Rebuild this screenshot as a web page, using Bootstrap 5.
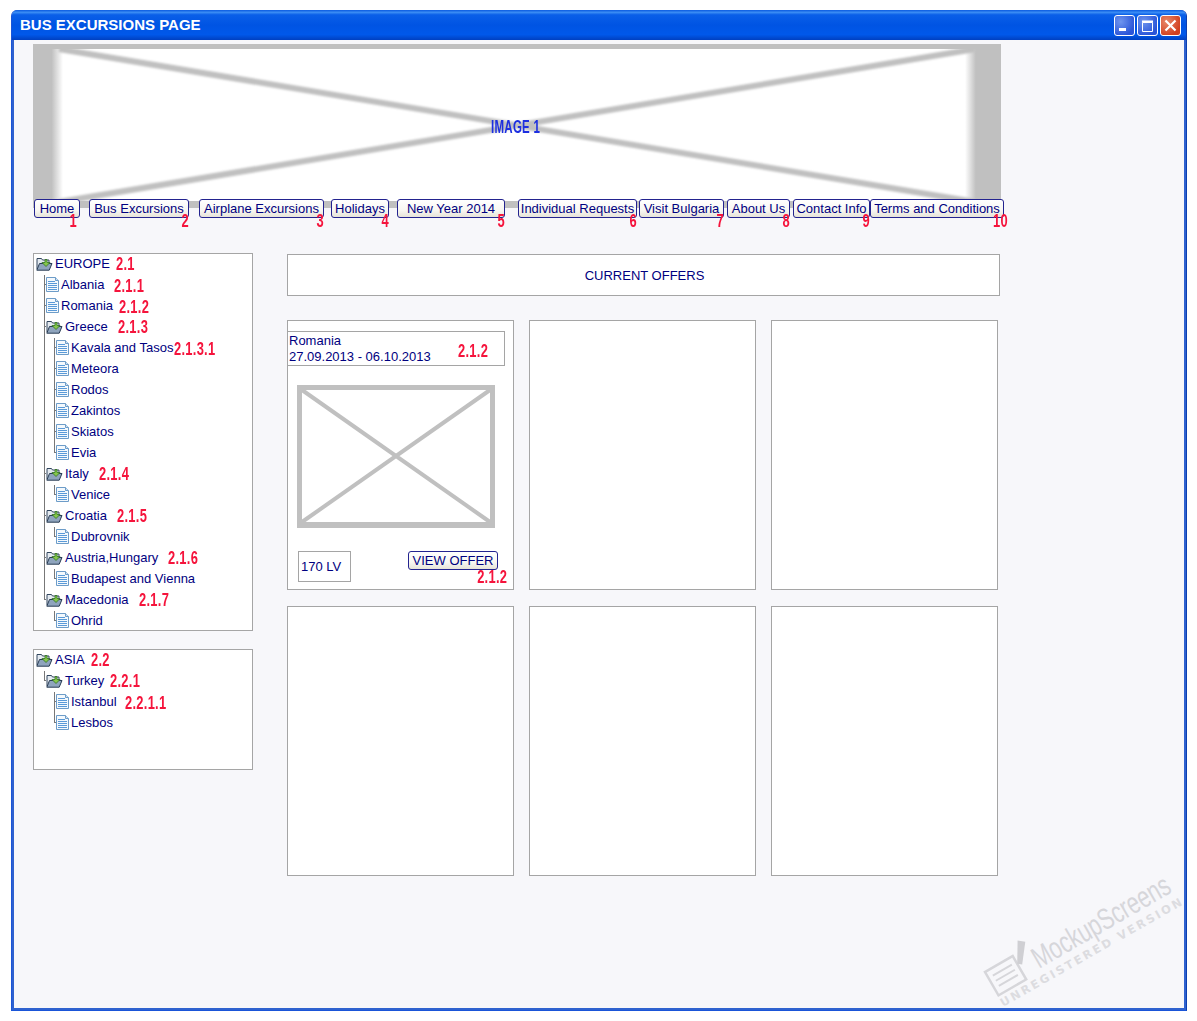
<!DOCTYPE html>
<html lang="en">
<head>
    <meta charset="UTF-8">
    <meta name="viewport" content="width=device-width, initial-scale=1.0">
    <title>Bus Excursions Page</title>
    <link href="https://cdn.jsdelivr.net/npm/bootstrap@5.3.0/dist/css/bootstrap.min.css" rel="stylesheet">
    <style>
        body {
            background: #fff;
            font-family: "Liberation Sans", Arial, sans-serif;
            font-size: 13px;
            color: #000080;
        }
        .app-window {
            position: relative;
            width: 1176px;
            height: 1001px;
            margin: 10px 0 0 11px;
            overflow: hidden;
            border-radius: 6px 6px 0 0;
            background: #f7f7fa;
            box-shadow: inset 2px 0 0 #2f62cf, inset -2px 0 0 #2f62cf, inset 0 -2px 0 #2f62cf;
            border-right: 1px solid #0c3fb0;
            border-left: 1px solid #1a55d8;
            border-bottom: 1px solid #1a55d8;
        }
        .title-bar {
            height: 30px;
            padding: 0 5px 0 8px;
            background: linear-gradient(#0a5ae0 0, #3a8cf4 8%, #0a5fe8 16%, #0054e3 50%, #0058ea 82%, #0040c0 100%);
        }
        .title-text {
            color: #fff;
            font-size: 15px;
            font-weight: 700;
        }
        .win-btn {
            width: 21px;
            height: 21px;
            margin-left: 2px;
            border: 1px solid #fff;
            border-radius: 3px;
            background: radial-gradient(circle at 30% 30%, #6f95ee, #2a55d8 75%);
        }
        .win-btn.is-close {
            background: radial-gradient(circle at 30% 30%, #e8886a, #d2401f 75%);
        }
        .win-btn svg {
            display: block;
        }
        .page-body {
            padding: 4px 0 0 21px;
        }
        .hero-image {
            position: relative;
            width: 968px;
            height: 164px;
        }
        .hero-image svg {
            display: block;
        }
        .menu-bar {
            position: relative;
            margin-top: -9px;
            margin-left: 1px;
        }
        .menu-btn {
            position: relative;
            height: 19px;
            padding: 0;
            border: 1px solid #23238f;
            border-radius: 3px;
            background: linear-gradient(#fff 0, #f8f7f2 60%, #e6e3d8 100%);
            color: #000080;
            font-size: 13px;
            line-height: 16px;
            white-space: nowrap;
            flex: none;
        }
        .menu-btn:hover {
            color: #000080;
            background: #fff;
            border-color: #23238f;
        }
        /* the red hand-written numbers: no condensed font here, so squeeze the bold one */
        .note-num {
            display: inline-block;
            font-weight: 700;
            font-size: 19px;
            line-height: 16px;
            letter-spacing: .4px;
            color: #f5143c;
            white-space: nowrap;
            transform: scaleX(.68);
            transform-origin: left center;
        }
        .hero-label {
            position: absolute;
            left: 458px;
            top: 75px;
            color: #1d2fe0;
            font-size: 18px;
            transform: scaleX(.64);
        }
        .menu-btn .note-num {
            position: absolute;
            top: 13px;
            right: -1px;
            transform-origin: right center;
        }
        .m1 { width: 46px; }
        .m1 .note-num { right: 2px !important; }
        .m2 { width: 100px; margin-left: 9px; }
        .m3 { width: 125px; margin-left: 10px; }
        .m4 { width: 58px; margin-left: 7px; }
        .m5 { width: 108px; margin-left: 8px; }
        .m6 { width: 119px; margin-left: 13px; }
        .m7 { width: 85px; margin-left: 2px; }
        .m8 { width: 63px; margin-left: 3px; }
        .m9 { width: 77px; margin-left: 3px; }
        .m10 { width: 134px; }
        .m10 .note-num { right: -5px !important; }
        .page-cols {
            margin-top: 35px;
            gap: 34px;
        }
        .side-col {
            width: 220px;
            flex: none;
        }
        .tree-box {
            padding: 0 0 0 2px;
            background: #fff;
            border: 1px solid #a5a5a5;
        }
        .tree-box.is-europe { height: 378px; margin-bottom: 18px; }
        .tree-box.is-asia { height: 121px; }
        .tree-list, .tree-list ul {
            list-style: none;
            margin: 0;
            padding: 0;
        }
        .tree-list ul {
            margin-left: 8px;
        }
        .tree-list ul li {
            position: relative;
            padding-left: 2px;
        }
        .tree-list ul li::before {
            content: "";
            position: absolute;
            left: 0;
            top: 0;
            bottom: 0;
            border-left: 1px solid #777;
        }
        .tree-list ul li:last-child::before {
            bottom: auto;
            height: 10px;
        }
        .tree-list ul li::after {
            content: "";
            position: absolute;
            left: 0;
            top: 9px;
            width: 2px;
            border-top: 1px solid #777;
        }
        .tree-row {
            position: relative;
            display: flex;
            align-items: center;
            height: 21px;
            padding-bottom: 2px;
            white-space: nowrap;
        }
        .tree-row svg {
            flex: none;
            margin-right: 2px;
        }
        .tree-row .note-num {
            margin-left: 6px;
        }
        .tree-row .note-wide {
            margin-left: 10px;
        }
        .tree-row .note-tight {
            margin-left: 1px;
        }
        .tree-row .note-low {
            margin-top: 3px;
        }
        .main-col {
            width: 713px;
            flex: none;
            padding-top: 1px;
        }
        .offers-title {
            height: 42px;
            margin-bottom: 24px;
            padding: 1px 0 0 2px;
            background: #fff;
            border: 1px solid #a5a5a5;
        }
        .offers-grid {
            display: grid;
            grid-template-columns: repeat(3, 227px);
            grid-auto-rows: 270px;
            column-gap: 15px;
            row-gap: 16px;
        }
        .offer-box {
            position: relative;
            background: #fff;
            border: 1px solid #a5a5a5;
            padding-top: 10px;
        }
        .offer-head {
            position: relative;
            height: 35px;
            margin-right: 8px;
            padding: 1px 0 0 1px;
            border: 1px solid #a5a5a5;
            border-left: 0;
            line-height: 16px;
        }
        .offer-head .note-num {
            position: absolute;
            left: 170px;
            top: 11px;
        }
        .offer-image {
            display: block;
            margin: 19px 0 0 9px;
        }
        .offer-foot {
            margin: 23px 15px 0 10px;
        }
        .price-box {
            width: 53px;
            height: 31px;
            padding-left: 2px;
            border: 1px solid #a5a5a5;
        }
        .offer-foot .menu-btn {
            width: 90px;
        }
        .offer-foot .menu-btn .note-num {
            top: 17px;
            right: -10px;
        }
        .watermark {
            position: absolute;
            right: 0;
            bottom: 0;
            pointer-events: none;
        }
    </style>
</head>
<body>
    <svg width="0" height="0" class="position-absolute">
        <symbol id="ico-folder" viewBox="0 0 17 14">
            <path d="M1 12V1.500h4.500l1 1.500H13v3" fill="#e4eaf0" stroke="#33475f"/>
            <path d="M.8 13.200 3.500 6.500H16l-2.800 6.700z" fill="#8fa4bd" stroke="#2a3d55"/>
            <path d="M9 2.500h2v3h3l-4 4-4-4h3z" fill="#86c84a" stroke="#2f6f22" stroke-width=".8"/>
        </symbol>
        <symbol id="ico-doc" viewBox="0 0 13 15">
            <path d="M.5.500h9l3 3v11H.500z" fill="#f4f9fd" stroke="#6d9cc8"/>
            <path d="M9.500.500v3h3" fill="#cfe2f3" stroke="#6d9cc8"/>
            <path d="M2 4.500h7M2 6.500h9M2 8.500h9M2 10.500h9M2 12.500h9" stroke="#5a9ad8"/>
        </symbol>
    </svg>

    <div class="app-window">
        <div class="title-bar d-flex align-items-center justify-content-between">
            <span class="title-text">BUS EXCURSIONS PAGE</span>
            <div class="d-flex">
                <div class="win-btn">
                    <svg width="19" height="19"><rect x="4" y="12" width="7" height="3" fill="#fff"/></svg>
                </div>
                <div class="win-btn">
                    <svg width="19" height="19"><path d="M4.500 6.500h10v9h-10z" fill="none" stroke="#fff"/><path d="M4 4.500h11v2H4z" fill="#fff"/></svg>
                </div>
                <div class="win-btn is-close">
                    <svg width="19" height="19"><path d="M4.500 4.500l10 10M14.500 4.500l-10 10" stroke="#fff" stroke-width="2.200"/></svg>
                </div>
            </div>
        </div>

        <div class="page-body">
            <div class="hero-image">
                <svg width="968" height="164">
                    <defs>
                        <linearGradient id="fadeLeft" x1="0" x2="1" y1="0" y2="0">
                            <stop offset="0" stop-color="#c0c0c0"/>
                            <stop offset=".62" stop-color="#c0c0c0"/>
                            <stop offset="1" stop-color="#c0c0c0" stop-opacity="0"/>
                        </linearGradient>
                        <linearGradient id="fadeRight" x1="1" x2="0" y1="0" y2="0">
                            <stop offset="0" stop-color="#c0c0c0"/>
                            <stop offset=".7" stop-color="#c0c0c0"/>
                            <stop offset="1" stop-color="#c0c0c0" stop-opacity="0"/>
                        </linearGradient>
                        <filter id="softBlur"><feGaussianBlur stdDeviation=".9"/></filter>
                    </defs>
                    <rect width="968" height="164" fill="#fff"/>
                    <g filter="url(#softBlur)">
                        <path d="M26 5 942 158M26 158 942 5" stroke="#c0c0c0" stroke-width="6"/>
                    </g>
                    <rect width="968" height="5" fill="#c0c0c0"/>
                    <rect y="157" width="968" height="7" fill="#c0c0c0"/>
                    <rect width="30" height="164" fill="url(#fadeLeft)"/>
                    <rect x="932" width="36" height="164" fill="url(#fadeRight)"/>
                </svg>
                <span class="note-num hero-label">IMAGE 1</span>
            </div>

            <div class="menu-bar d-flex">
                <button type="button" class="btn menu-btn m1">Home<span class="note-num">1</span></button>
                <button type="button" class="btn menu-btn m2">Bus Excursions<span class="note-num">2</span></button>
                <button type="button" class="btn menu-btn m3">Airplane Excursions<span class="note-num">3</span></button>
                <button type="button" class="btn menu-btn m4">Holidays<span class="note-num">4</span></button>
                <button type="button" class="btn menu-btn m5">New Year 2014<span class="note-num">5</span></button>
                <button type="button" class="btn menu-btn m6">Individual Requests<span class="note-num">6</span></button>
                <button type="button" class="btn menu-btn m7">Visit Bulgaria<span class="note-num">7</span></button>
                <button type="button" class="btn menu-btn m8">About Us<span class="note-num">8</span></button>
                <button type="button" class="btn menu-btn m9">Contact Info<span class="note-num">9</span></button>
                <button type="button" class="btn menu-btn m10">Terms and Conditions<span class="note-num">10</span></button>
            </div>

            <div class="page-cols d-flex">
                <div class="side-col">
                    <div class="tree-box is-europe">
                        <ul class="tree-list">
                            <li>
                                <div class="tree-row"><svg width="17" height="14"><use href="#ico-folder"/></svg>EUROPE<span class="note-num">2.1</span></div>
                                <ul>
                                    <li><div class="tree-row"><svg width="13" height="15"><use href="#ico-doc"/></svg>Albania<span class="note-num note-low note-wide">2.1.1</span></div></li>
                                    <li><div class="tree-row"><svg width="13" height="15"><use href="#ico-doc"/></svg>Romania<span class="note-num note-low">2.1.2</span></div></li>
                                    <li>
                                        <div class="tree-row"><svg width="17" height="14"><use href="#ico-folder"/></svg>Greece<span class="note-num note-wide">2.1.3</span></div>
                                        <ul>
                                            <li><div class="tree-row"><svg width="13" height="15"><use href="#ico-doc"/></svg>Kavala and Tasos<span class="note-num note-tight note-low">2.1.3.1</span></div></li>
                                            <li><div class="tree-row"><svg width="13" height="15"><use href="#ico-doc"/></svg>Meteora</div></li>
                                            <li><div class="tree-row"><svg width="13" height="15"><use href="#ico-doc"/></svg>Rodos</div></li>
                                            <li><div class="tree-row"><svg width="13" height="15"><use href="#ico-doc"/></svg>Zakintos</div></li>
                                            <li><div class="tree-row"><svg width="13" height="15"><use href="#ico-doc"/></svg>Skiatos</div></li>
                                            <li><div class="tree-row"><svg width="13" height="15"><use href="#ico-doc"/></svg>Evia</div></li>
                                        </ul>
                                    </li>
                                    <li>
                                        <div class="tree-row"><svg width="17" height="14"><use href="#ico-folder"/></svg>Italy<span class="note-num note-wide">2.1.4</span></div>
                                        <ul><li><div class="tree-row"><svg width="13" height="15"><use href="#ico-doc"/></svg>Venice</div></li></ul>
                                    </li>
                                    <li>
                                        <div class="tree-row"><svg width="17" height="14"><use href="#ico-folder"/></svg>Croatia<span class="note-num note-wide">2.1.5</span></div>
                                        <ul><li><div class="tree-row"><svg width="13" height="15"><use href="#ico-doc"/></svg>Dubrovnik</div></li></ul>
                                    </li>
                                    <li>
                                        <div class="tree-row"><svg width="17" height="14"><use href="#ico-folder"/></svg>Austria,Hungary<span class="note-num note-wide">2.1.6</span></div>
                                        <ul><li><div class="tree-row"><svg width="13" height="15"><use href="#ico-doc"/></svg>Budapest and Vienna</div></li></ul>
                                    </li>
                                    <li>
                                        <div class="tree-row"><svg width="17" height="14"><use href="#ico-folder"/></svg>Macedonia<span class="note-num note-wide">2.1.7</span></div>
                                        <ul><li><div class="tree-row"><svg width="13" height="15"><use href="#ico-doc"/></svg>Ohrid</div></li></ul>
                                    </li>
                                </ul>
                            </li>
                        </ul>
                    </div>

                    <div class="tree-box is-asia">
                        <ul class="tree-list">
                            <li>
                                <div class="tree-row"><svg width="17" height="14"><use href="#ico-folder"/></svg>ASIA<span class="note-num">2.2</span></div>
                                <ul>
                                    <li>
                                        <div class="tree-row"><svg width="17" height="14"><use href="#ico-folder"/></svg>Turkey<span class="note-num">2.2.1</span></div>
                                        <ul>
                                            <li><div class="tree-row"><svg width="13" height="15"><use href="#ico-doc"/></svg>Istanbul<span class="note-num note-low ms-2">2.2.1.1</span></div></li>
                                            <li><div class="tree-row"><svg width="13" height="15"><use href="#ico-doc"/></svg>Lesbos</div></li>
                                        </ul>
                                    </li>
                                </ul>
                            </li>
                        </ul>
                    </div>
                </div>

                <div class="main-col">
                    <div class="offers-title d-flex align-items-center justify-content-center">CURRENT OFFERS</div>
                    <div class="offers-grid">
                        <div class="offer-box">
                            <div class="offer-head">Romania<br>27.09.2013 - 06.10.2013<span class="note-num">2.1.2</span></div>
                            <svg class="offer-image" width="198" height="143">
                                <rect width="198" height="143" fill="#c0c0c0"/>
                                <rect x="5" y="5" width="188" height="132" fill="#fff"/>
                                <path d="M5 5 193 137M193 5 5 137" stroke="#c0c0c0" stroke-width="4"/>
                            </svg>
                            <div class="offer-foot d-flex justify-content-between align-items-start">
                                <div class="price-box d-flex align-items-center">170 LV</div>
                                <button type="button" class="btn menu-btn">VIEW OFFER<span class="note-num">2.1.2</span></button>
                            </div>
                        </div>
                        <div class="offer-box"></div>
                        <div class="offer-box"></div>
                        <div class="offer-box"></div>
                        <div class="offer-box"></div>
                        <div class="offer-box"></div>
                    </div>
                </div>
            </div>
        </div>

        <svg class="watermark" width="210" height="150" viewBox="0 0 210 150">
            <g transform="translate(63 109) rotate(-30) scale(.72 1)">
                <text font-family="'Liberation Sans',sans-serif" font-size="30" fill="#d6d6da">MockupScreens</text>
            </g>
            <g transform="translate(27 147) rotate(-29.600)">
                <text font-family="'DejaVu Sans',sans-serif" font-weight="700" font-size="11.500" letter-spacing="2.400" fill="#dcdce0">UNREGISTERED VERSION</text>
            </g>
            <g transform="translate(9 112) rotate(-30)" fill="none" stroke="#d6d6da">
                <path d="M0 0H32V27H0z" stroke-width="2.500"/>
                <path d="M5 7H27M5 13H27M5 19H27" stroke-width="2"/>
                <path d="M32 9 44-11 50-6 36 12z" fill="#cfcfd3" stroke="none"/>
            </g>
        </svg>
    </div>

    <script src="https://cdn.jsdelivr.net/npm/bootstrap@5.3.0/dist/js/bootstrap.bundle.min.js"></script>
</body>
</html>
